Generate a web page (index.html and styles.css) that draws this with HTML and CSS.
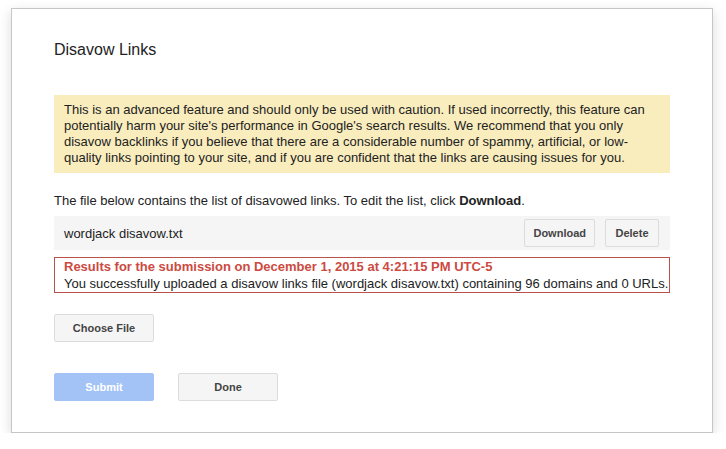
FILE: index.html
```html
<!DOCTYPE html>
<html lang="en">
<head>
    <meta charset="UTF-8">
    <title>Disavow Links</title>
    <link rel="stylesheet" href="styles.css">
</head>
<body>
    <div class="dialog">
        <h1 class="dialog-title">Disavow Links</h1>

        <div class="warning">
            This is an advanced feature and should only be used with caution. If used incorrectly, this feature can
            potentially harm your site's performance in Google's search results. We recommend that you only
            disavow backlinks if you believe that there are a considerable number of spammy, artificial, or low-quality
            links pointing to your site, and if you are confident that the links are causing issues for you.
        </div>

        <p class="intro">The file below contains the list of disavowed links. To edit the list, click <b>Download</b>.</p>

        <div class="file-row">
            <span class="file-name">wordjack disavow.txt</span>
            <div class="file-actions">
                <button class="btn">Download</button>
                <button class="btn">Delete</button>
            </div>
        </div>

        <div class="result">
            <div class="result-title">Results for the submission on December 1, 2015 at 4:21:15 PM UTC-5</div>
            <div class="result-text">You successfully uploaded a disavow links file (wordjack disavow.txt) containing 96 domains and 0 URLs.</div>
        </div>

        <div class="choose">
            <button class="btn btn-wide">Choose File</button>
        </div>

        <div class="dialog-actions">
            <button class="btn btn-wide btn-primary" disabled>Submit</button>
            <button class="btn btn-wide">Done</button>
        </div>
    </div>
</body>
</html>
```

FILE: styles.css
```css
/* General */
body {
    font-family: 'Liberation Sans', Arial, sans-serif;
    font-size: 13px;
    margin: 0;
    padding: 0;
    background-color: #fff;
    color: #222;
}

/* Dialog */
.dialog {
    box-sizing: border-box;
    width: 702px;
    margin: 8px 0 0 11px;
    padding: 32px 42px 31px 42px;
    background-color: #fff;
    border: 1px solid #c6c6c6;
    box-shadow: 0 4px 12px rgba(0, 0, 0, 0.15);
}

.dialog-title {
    font-size: 16px;
    font-weight: normal;
    line-height: 18px;
    margin: 0 0 36px;
    color: #222;
}

/* Warning */
.warning {
    background-color: #f9edbe;
    padding: 7px 10px;
    line-height: 16px;
}

.intro {
    margin: 20px 0 7px;
    line-height: 16px;
}

/* File row */
.file-row {
    display: flex;
    justify-content: space-between;
    align-items: center;
    background-color: #f5f5f5;
    padding: 3px 11px 3px 10px;
}

.file-actions {
    display: flex;
    gap: 10px;
}

/* Buttons */
.btn {
    font-family: 'Liberation Sans', Arial, sans-serif;
    font-size: 11px;
    font-weight: bold;
    color: #444;
    height: 28px;
    min-width: 54px;
    padding: 0 8px;
    background-color: #f5f5f5;
    border: 1px solid #dcdcdc;
    border-radius: 2px;
    cursor: pointer;
}

.btn-wide {
    width: 100px;
}

.btn-primary {
    background-color: #a3c3f7;
    border-color: #a3c3f7;
    color: #fff;
}

/* Result */
.result {
    margin-top: 7px;
    border: 1px solid #b9524a;
    padding: 0 0 0 9px;
    line-height: 17px;
    white-space: nowrap;
}

.result-title {
    color: #cc4a3f;
    font-weight: bold;
}

.choose {
    margin-top: 21px;
}

.dialog-actions {
    display: flex;
    gap: 24px;
    margin-top: 31px;
}
```
